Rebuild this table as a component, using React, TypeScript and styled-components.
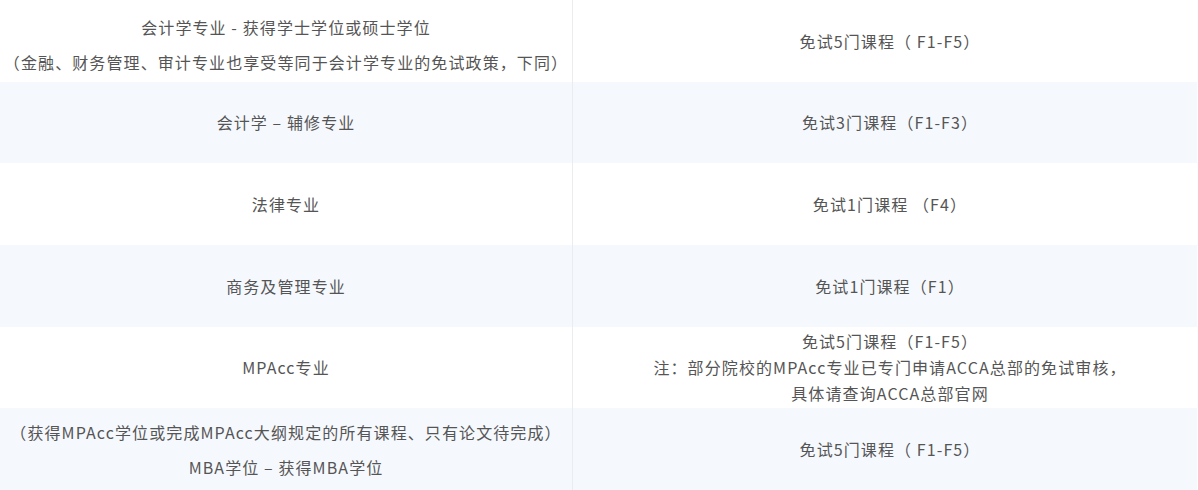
import React from 'react';
import styled, { createGlobalStyle } from 'styled-components';

const GlobalStyle = createGlobalStyle`
  html, body {
    margin: 0;
    padding: 0;
    background: #fff;
  }
  body {
    font-family: "Noto Sans CJK SC", "Noto Sans", sans-serif;
  }
`;

type Row = {
  left: string[];
  right: string[];
  leftGap?: boolean;
};

const rows: Row[] = [
  {
    left: ['会计学专业 - 获得学士学位或硕士学位', '（金融、财务管理、审计专业也享受等同于会计学专业的免试政策，下同）'],
    right: ['免试5门课程（ F1-F5）'],
    leftGap: true,
  },
  { left: ['会计学 – 辅修专业'], right: ['免试3门课程（F1-F3）'] },
  { left: ['法律专业'], right: ['免试1门课程 （F4）'] },
  { left: ['商务及管理专业'], right: ['免试1门课程（F1）'] },
  {
    left: ['MPAcc专业'],
    right: ['免试5门课程（F1-F5）', '注：部分院校的MPAcc专业已专门申请ACCA总部的免试审核，', '具体请查询ACCA总部官网'],
  },
  {
    left: ['（获得MPAcc学位或完成MPAcc大纲规定的所有课程、只有论文待完成）', 'MBA学位 – 获得MBA学位'],
    right: ['免试5门课程（ F1-F5）'],
    leftGap: true,
  },
];

const App = () => {
  return (
    <>
      <GlobalStyle />
      <Table>
        {rows.map((row, i) => (
          <TableRow key={i} $striped={i % 2 === 1}>
            <Cell $first $lift={i === 0}>
              {row.left.map((t, j) => (
                <Line key={j} $gap={row.leftGap}>{t}</Line>
              ))}
            </Cell>
            <Cell>
              {row.right.map((t, j) => (
                <Line key={j}>{t}</Line>
              ))}
            </Cell>
          </TableRow>
        ))}
      </Table>
    </>
  );
};

const Table = styled.div`
  width: 1197px;
  height: 490px;
  display: grid;
  grid-template-rows: repeat(6, 1fr);
`;

const TableRow = styled.div<{ $striped?: boolean }>`
  display: grid;
  grid-template-columns: 573px 1fr;
  background-color: ${(p) => (p.$striped ? '#f5f9fe' : '#fff')};
`;

const Cell = styled.div<{ $first?: boolean; $lift?: boolean }>`
  display: flex;
  flex-direction: column;
  align-items: center;
  justify-content: center;
  border-right: ${(p) => (p.$first ? '1px solid #e9edf1' : 'none')};
  padding-top: ${(p) => (p.$lift ? '8px' : '0')};
  padding-left: ${(p) => (p.$first ? '0' : '10px')};
  color: #555;
  font-size: 16px;
  letter-spacing: 1.1px;
  text-align: center;
  white-space: nowrap;
`;

const Line = styled.div<{ $gap?: boolean }>`
  line-height: 26px;
  &:not(:first-child) {
    margin-top: ${(p) => (p.$gap ? '9px' : '0')};
  }
`;

export default App;
